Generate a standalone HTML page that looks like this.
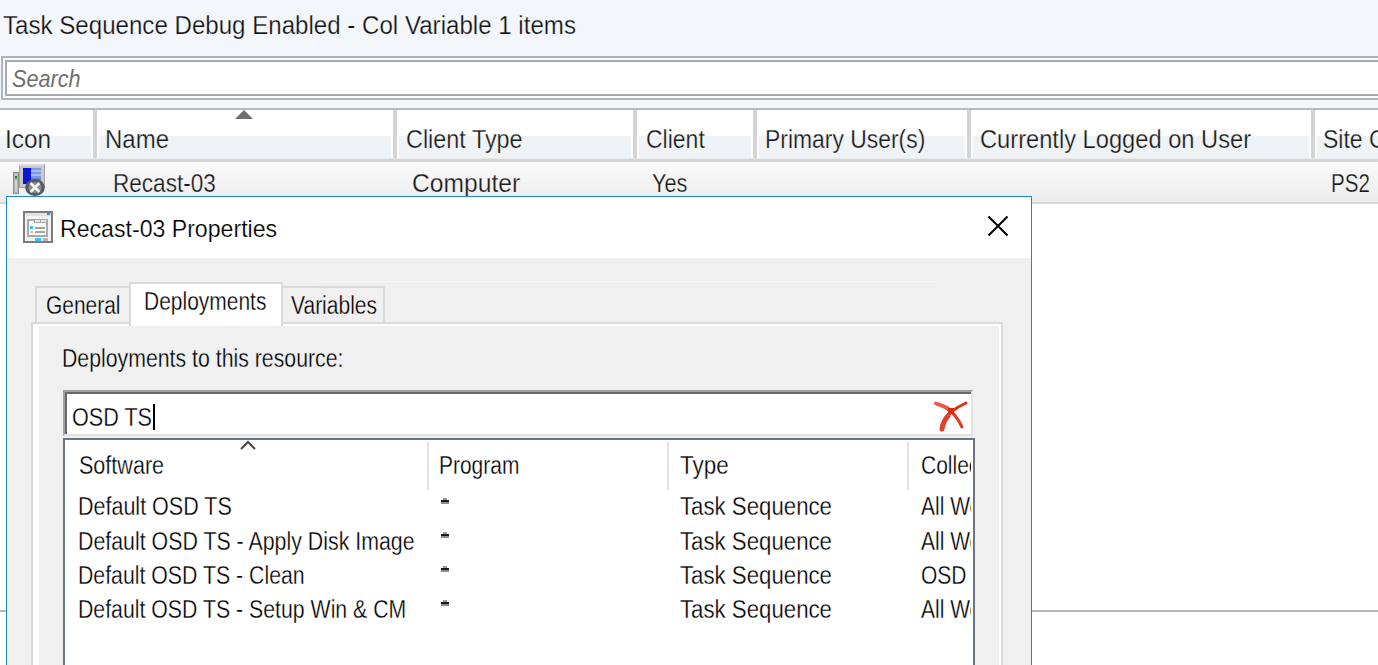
<!DOCTYPE html>
<html><head><meta charset="utf-8">
<style>
*{margin:0;padding:0;box-sizing:border-box}
html,body{width:1378px;height:665px;overflow:hidden;background:#fff;position:relative}
body{font-family:"Liberation Sans",sans-serif;color:#000}
.a{position:absolute}
.t{position:absolute;white-space:pre;line-height:1;transform-origin:0 0;font-family:"Liberation Sans",sans-serif}
.seg{font-size:25px;color:#1a1a1a;-webkit-text-stroke:0.25px #f4f4f4}
.ms{font-size:25px;color:#000;-webkit-text-stroke:0.3px #fff}
.g{-webkit-text-stroke:0.3px #f0f0f0}
</style></head><body>

<!-- top area -->
<div class="a" style="left:0;top:0;width:1378px;height:108px;background:#f3f6fb"></div>
<div class="t" style="left:2.5px;top:12.75px;font-size:25px;transform:scaleX(0.964);color:#111;-webkit-text-stroke:0.25px #f3f6fb">Task Sequence Debug Enabled - Col Variable 1 items</div>

<!-- search box -->
<div class="a" style="left:1px;top:56px;width:1400px;height:44px;border:2px solid #b0b3b8;background:#fafbfd"></div>
<div class="a" style="left:5px;top:60px;width:1400px;height:36px;border:2px solid #a7aab0;background:#fff"></div>
<div class="t" style="left:12px;top:67px;font-size:24px;font-style:italic;color:#6e6e6e;transform:scaleX(0.9)">Search</div>

<!-- header -->
<div class="a" style="left:0;top:108px;width:1378px;height:2px;background:#b6b9bf"></div>
<div class="a" style="left:0;top:110px;width:1378px;height:25px;background:#fff"></div>
<div class="a" style="left:0;top:136px;width:1378px;height:22px;background:#fff"></div>
<div class="a" style="left:0px;top:136px;width:91px;height:22px;background:#f0f3f6"></div>
<div class="a" style="left:99px;top:136px;width:292px;height:22px;background:#f0f3f6"></div>
<div class="a" style="left:399px;top:136px;width:232px;height:22px;background:#f0f3f6"></div>
<div class="a" style="left:639px;top:136px;width:112px;height:22px;background:#f0f3f6"></div>
<div class="a" style="left:759px;top:136px;width:206px;height:22px;background:#f0f3f6"></div>
<div class="a" style="left:973px;top:136px;width:336px;height:22px;background:#f0f3f6"></div>
<div class="a" style="left:1317px;top:136px;width:61px;height:22px;background:#f0f3f6"></div>
<div class="a" style="left:0;top:158px;width:1378px;height:4px;background:linear-gradient(#e6e8ea 0,#e6e8ea 25%,#d6d6d6 25%,#d6d6d6 100%)"></div>
<div class="a" style="left:93px;top:110px;width:4px;height:48px;background:#d3d3d3"></div>
<div class="a" style="left:393px;top:110px;width:4px;height:48px;background:#d3d3d3"></div>
<div class="a" style="left:633px;top:110px;width:4px;height:48px;background:#d3d3d3"></div>
<div class="a" style="left:753px;top:110px;width:4px;height:48px;background:#d3d3d3"></div>
<div class="a" style="left:967px;top:110px;width:4px;height:48px;background:#d3d3d3"></div>
<div class="a" style="left:1311px;top:110px;width:4px;height:48px;background:#d3d3d3"></div>
<svg class="a" style="left:230px;top:108px" width="30" height="14"><polygon points="14,2 5,11 23,11" fill="#6e6e6e"/></svg>

<div class="t seg" style="left:4.5px;top:126.75px;transform:scaleX(0.975)">Icon</div>
<div class="t seg" style="left:105px;top:126.75px;transform:scaleX(0.96)">Name</div>
<div class="t seg" style="left:406px;top:126.75px;transform:scaleX(0.936)">Client Type</div>
<div class="t seg" style="left:646px;top:126.75px;transform:scaleX(0.92)">Client</div>
<div class="t seg" style="left:765px;top:126.75px;transform:scaleX(0.916)">Primary User(s)</div>
<div class="t seg" style="left:980px;top:126.75px;transform:scaleX(0.947)">Currently Logged on User</div>
<div class="t seg" style="left:1323px;top:126.75px;transform:scaleX(0.92)">Site Code</div>

<!-- row -->
<div class="a" style="left:0;top:162px;width:1378px;height:40px;background:linear-gradient(#fbfbfb,#ececec)"></div>
<div class="a" style="left:0;top:202px;width:1378px;height:2px;background:#d6d6d6"></div>
<div class="t seg" style="left:112.5px;top:170.75px;transform:scaleX(0.902)">Recast-03</div>
<div class="t seg" style="left:412px;top:170.75px;transform:scaleX(0.985)">Computer</div>
<div class="t seg" style="left:651.5px;top:170.75px;transform:scaleX(0.869)">Yes</div>
<div class="t seg" style="left:1330.5px;top:170.75px;transform:scaleX(0.823)">PS2</div>

<!-- row icon -->
<svg class="a" style="left:12px;top:163px" width="36" height="36" shape-rendering="crispEdges">
<rect x="1" y="9" width="6" height="22" fill="#8e8e8e"/>
<rect x="2" y="10" width="4" height="20" fill="#b4b4b4"/>
<rect x="3" y="11" width="2" height="18" fill="#d0d0d0"/>
<rect x="3" y="13" width="2" height="2" fill="#1f8a1f"/>
<rect x="3" y="15" width="2" height="2" fill="#44e044"/>
<rect x="7" y="1" width="26" height="24" fill="#a6a6a6"/>
<rect x="7" y="1" width="25" height="2" fill="#dcdcdc"/>
<rect x="8" y="3" width="24" height="21" fill="#c8c8c8"/>
<rect x="11" y="5" width="18" height="16" fill="#9a9aa8"/>
<rect x="11" y="5" width="8" height="16" fill="#0a16d8"/>
<rect x="19" y="5" width="10" height="16" fill="#7f98e2"/>
<rect x="19" y="7" width="10" height="2" fill="#a9bbee"/>
<rect x="19" y="11" width="10" height="2" fill="#a9bbee"/>
<rect x="19" y="15" width="10" height="2" fill="#6a84d4"/>
</svg>
<svg class="a" style="left:25px;top:179px" width="20" height="17">
<ellipse cx="10" cy="8.5" rx="9.8" ry="8.5" fill="#5a5a5a"/>
<ellipse cx="10" cy="8.5" rx="6.5" ry="5.5" fill="#8a8a8a"/>
<path d="M5.5 4 L14.5 13 M14.5 4 L5.5 13" stroke="#f6f6f6" stroke-width="2.6"/>
</svg>
<!-- bottom line behind dialog -->
<div class="a" style="left:0;top:610px;width:1378px;height:2px;background:#b9b9b9"></div>

<!-- dialog -->
<div class="a" id="dlg" style="left:6px;top:196px;width:1026px;height:480px;border:1px solid #1d86d8;background:#f0f0f0">
  <div class="a" style="left:0;top:0;width:1024px;height:61px;background:#fff"></div>
</div>
<!-- dialog icon -->
<svg class="a" style="left:23px;top:211px" width="30" height="32" shape-rendering="crispEdges">
<rect x="0" y="0" width="30" height="32" rx="1" fill="#7c7c7c"/>
<rect x="2" y="2" width="26" height="28" fill="#f3f3f3"/>
<rect x="2" y="2" width="26" height="3" fill="#e2e2e2"/>
<rect x="24" y="1" width="3" height="3" fill="#5f7fb5"/>
<rect x="4" y="8" width="21" height="18" fill="#a9a9a9"/>
<rect x="6" y="10" width="17" height="14" fill="#fbfbfb"/>
<rect x="11" y="8" width="14" height="4" fill="#a9a9a9"/>
<rect x="12" y="9" width="5" height="2" fill="#e6e6e6"/>
<rect x="18" y="9" width="5" height="2" fill="#e6e6e6"/>
<rect x="7" y="15" width="3" height="3" fill="#33c3f6"/>
<rect x="12" y="16" width="10" height="2" fill="#a2a2a2"/>
<rect x="7" y="20" width="3" height="2" fill="#c4c4c4"/>
<rect x="12" y="20" width="10" height="2" fill="#a2a2a2"/>
<rect x="12" y="27" width="6" height="3" fill="#30c8f8"/>
<rect x="20" y="27" width="5" height="3" fill="#b4b4b4"/>
</svg>
<div class="t" style="left:59.5px;top:216.75px;font-size:24px;transform:scaleX(0.963);color:#000;-webkit-text-stroke:0.2px #fff">Recast-03 Properties</div>
<svg class="a" style="left:986px;top:214px" width="24" height="24"><path d="M2.5 2.5 L21.5 21.5 M21.5 2.5 L2.5 21.5" stroke="#000" stroke-width="2"/></svg>

<!-- faint line -->
<div class="a" style="left:319px;top:281px;width:620px;height:1px;background:#f5f5f5"></div>

<!-- tabs -->
<div class="a" style="left:35px;top:286px;width:96px;height:37px;border:2px solid #d9d9d9;border-bottom:none;background:#f0f0f0"></div>
<div class="a" style="left:281px;top:286px;width:104px;height:37px;border:2px solid #d9d9d9;border-bottom:none;background:#f0f0f0"></div>
<!-- panel -->
<div class="a" style="left:31px;top:322px;width:972px;height:400px;border:2px solid #d9d9d9;background:#fff"></div>
<div class="a" style="left:39px;top:326px;width:960px;height:400px;background:#f0f0f0"></div>
<!-- selected tab -->
<div class="a" style="left:129px;top:282px;width:154px;height:44px;border:2px solid #d9d9d9;border-bottom:none;background:#fff"></div>

<div class="t ms g" style="left:46px;top:292.75px;transform:scaleX(0.837)">General</div>
<div class="t ms" style="left:144px;top:288.75px;transform:scaleX(0.839)">Deployments</div>
<div class="t ms g" style="left:290.5px;top:292.75px;transform:scaleX(0.84)">Variables</div>

<div class="t ms g" style="left:61.5px;top:346.25px;transform:scaleX(0.851)">Deployments to this resource:</div>

<!-- search box -->
<div class="a" style="left:63px;top:390px;width:910px;height:46px;background:#fff;border-top:2px solid #a0a0a0;border-left:2px solid #a0a0a0;border-right:2px solid #e3e3e3;border-bottom:2px solid #e3e3e3"></div>
<div class="a" style="left:65px;top:392px;width:906px;height:2px;background:#696969"></div>
<div class="a" style="left:65px;top:392px;width:2px;height:42px;background:#696969"></div>
<div class="t ms" style="left:71.5px;top:404.75px;transform:scaleX(0.864)">OSD TS</div>
<div class="a" style="left:153px;top:404px;width:2px;height:26px;background:#000"></div>
<svg class="a" style="left:930px;top:398px" width="42" height="36">
<path d="M6 5.5 Q14 8 20 12.5 Q27 18.5 32 29" stroke="#e03a26" stroke-width="3" fill="none" stroke-linecap="round"/>
<path d="M6 5.5 Q12 7 18 10.5" stroke="#ea5a46" stroke-width="3.8" fill="none" stroke-linecap="round"/>
<path d="M36 5 Q27 9 21 14 Q14 20 11.5 31" stroke="#e0301c" stroke-width="3" fill="none" stroke-linecap="round"/>
<path d="M18 18 Q13 23.5 12 31" stroke="#e4402a" stroke-width="5" fill="none" stroke-linecap="round"/>
<rect x="18" y="10" width="6" height="6" fill="#dc2a12"/>
</svg>

<!-- list -->
<div class="a" style="left:63px;top:438px;width:912px;height:300px;border:2px solid #6d7584;background:#fff;overflow:hidden">
</div>
<svg class="a" style="left:238px;top:439px" width="20" height="14"><path d="M3 10 L10 3 L17 10" stroke="#444" stroke-width="2" fill="none"/></svg>
<div class="a" style="left:427px;top:442px;width:2px;height:48px;background:#e3e3e3"></div>
<div class="a" style="left:667px;top:442px;width:2px;height:48px;background:#e3e3e3"></div>
<div class="a" style="left:907px;top:442px;width:2px;height:48px;background:#e3e3e3"></div>

<div class="a" style="left:65px;top:440px;width:906px;height:240px;overflow:hidden">
  <div class="t ms" style="left:13.5px;top:12.75px;transform:scaleX(0.862)">Software</div>
  <div class="t ms" style="left:373.5px;top:12.75px;transform:scaleX(0.838)">Program</div>
  <div class="t ms" style="left:614.5px;top:12.75px;transform:scaleX(0.899)">Type</div>
  <div class="t ms" style="left:855.5px;top:12.75px;transform:scaleX(0.84)">Collection</div>

  <div class="t ms" style="left:13px;top:54.35px;transform:scaleX(0.86)">Default OSD TS</div>
  <div class="t ms" style="left:13px;top:88.5px;transform:scaleX(0.854)">Default OSD TS - Apply Disk Image</div>
  <div class="t ms" style="left:13px;top:122.5px;transform:scaleX(0.851)">Default OSD TS - Clean</div>
  <div class="t ms" style="left:13px;top:156.5px;transform:scaleX(0.851)">Default OSD TS - Setup Win &amp; CM</div>


  <div class="a" style="left:378px;top:58px;width:4px;height:2px;background:#9a9a9a"></div>
  <div class="a" style="left:376px;top:60px;width:8px;height:2px;background:#1a1a1a"></div>
  <div class="a" style="left:376px;top:62px;width:8px;height:2px;background:#8c8c8c"></div>
  <div class="a" style="left:378px;top:92px;width:4px;height:2px;background:#9a9a9a"></div>
  <div class="a" style="left:376px;top:94px;width:8px;height:2px;background:#1a1a1a"></div>
  <div class="a" style="left:376px;top:96px;width:8px;height:2px;background:#8c8c8c"></div>
  <div class="a" style="left:378px;top:126px;width:4px;height:2px;background:#9a9a9a"></div>
  <div class="a" style="left:376px;top:128px;width:8px;height:2px;background:#1a1a1a"></div>
  <div class="a" style="left:376px;top:130px;width:8px;height:2px;background:#8c8c8c"></div>
  <div class="a" style="left:378px;top:160px;width:4px;height:2px;background:#9a9a9a"></div>
  <div class="a" style="left:376px;top:162px;width:8px;height:2px;background:#1a1a1a"></div>
  <div class="a" style="left:376px;top:164px;width:8px;height:2px;background:#8c8c8c"></div>
  <div class="t ms" style="left:614.5px;top:54.35px;transform:scaleX(0.889)">Task Sequence</div>
  <div class="t ms" style="left:614.5px;top:88.5px;transform:scaleX(0.889)">Task Sequence</div>
  <div class="t ms" style="left:614.5px;top:122.5px;transform:scaleX(0.889)">Task Sequence</div>
  <div class="t ms" style="left:614.5px;top:156.5px;transform:scaleX(0.889)">Task Sequence</div>

  <div class="t ms" style="left:855.5px;top:54.35px;transform:scaleX(0.84)">All Workstations</div>
  <div class="t ms" style="left:855.5px;top:88.5px;transform:scaleX(0.84)">All Workstations</div>
  <div class="t ms" style="left:855.5px;top:122.5px;transform:scaleX(0.84)">OSD Collection</div>
  <div class="t ms" style="left:855.5px;top:156.5px;transform:scaleX(0.84)">All Workstations</div>
</div>

</body></html>
